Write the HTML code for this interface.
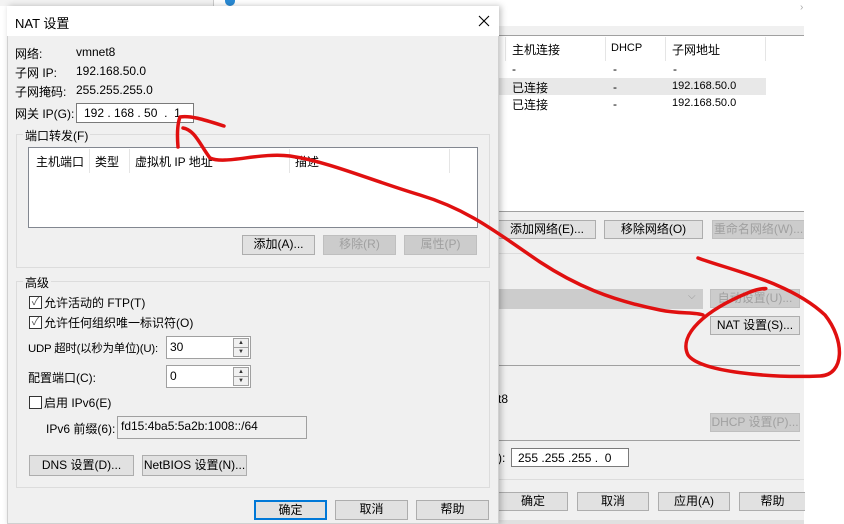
<!DOCTYPE html>
<html><head><meta charset="utf-8"><style>
*{box-sizing:border-box;margin:0;padding:0}
body{width:844px;height:524px;position:relative;overflow:hidden;background:#fff;font-family:"Liberation Sans","Noto Sans CJK SC",sans-serif;font-size:12px;color:#000}
.a{position:absolute;white-space:nowrap}
.btn{position:absolute;background:#e1e1e1;border:1px solid #adadad;text-align:center;line-height:17px;font-size:12px}
.dis{color:#a0a0a0;background:#cccccc;border-color:#bfbfbf}
.hl{position:absolute;height:1px;background:#a0a0a0}
.inp{position:absolute;background:#fff;border:1px solid #7a7a7a;padding-left:4px;line-height:18px}
.cb{position:absolute;width:13px;height:13px;border:1px solid #333;background:#fff;font-size:11px;line-height:11px;text-align:center;color:#555}
.grp{position:absolute;border:1px solid #dcdcdc}
.spin{position:absolute;width:16px;background:#f0f0f0;border:1px solid #a0a0a0;height:10px;font-size:6px;line-height:8px;text-align:center;color:#333}
</style></head><body>
<!-- background window -->
<div class="a" style="left:0;top:0;width:214px;height:6px;background:#f3f3f3"></div>
<div class="a" style="left:213px;top:0;width:1px;height:6px;background:#ccc"></div>
<div class="a" style="left:225px;top:0;width:10px;height:6px;border-radius:0 0 5px 5px;background:#2a8ad4"></div>
<div class="a" style="left:214px;top:26px;width:590px;height:498px;background:#f0f0f0"></div>
<div class="a" style="left:800px;top:2px;color:#aaa;font-size:10px">›</div>
<div class="a" style="left:214px;top:35px;width:590px;height:176px;background:#fff;border-top:1px solid #a0a0a0"></div>
<div class="a" style="left:505px;top:37px;width:1px;height:24px;background:#e5e5e5"></div>
<div class="a" style="left:605px;top:37px;width:1px;height:24px;background:#e5e5e5"></div>
<div class="a" style="left:665px;top:37px;width:1px;height:24px;background:#e5e5e5"></div>
<div class="a" style="left:765px;top:37px;width:1px;height:24px;background:#e5e5e5"></div>
<div class="a" style="left:512px;top:41px">主机连接</div>
<div class="a" style="left:611px;top:42px;font-size:11px">DHCP</div>
<div class="a" style="left:672px;top:41px">子网地址</div>
<div class="a" style="left:512px;top:62px">-</div><div class="a" style="left:613px;top:62px">-</div><div class="a" style="left:673px;top:62px">-</div>
<div class="a" style="left:498px;top:78px;width:268px;height:17px;background:#e8e8e8"></div>
<div class="a" style="left:512px;top:79px">已连接</div><div class="a" style="left:613px;top:80px">-</div><div class="a" style="left:672px;top:80px;font-size:11px">192.168.50.0</div>
<div class="a" style="left:512px;top:96px">已连接</div><div class="a" style="left:613px;top:97px">-</div><div class="a" style="left:672px;top:97px;font-size:11px">192.168.50.0</div>
<div class="hl" style="left:498px;top:211px;width:306px"></div>
<div class="btn" style="left:498px;top:220px;width:98px;height:19px">添加网络(E)...</div>
<div class="btn" style="left:604px;top:220px;width:99px;height:19px">移除网络(O)</div>
<div class="btn dis" style="left:712px;top:220px;width:92px;height:19px;border-right:none">重命名网络(W)...</div>
<div class="hl" style="left:498px;top:253px;width:306px;background:#dcdcdc"></div>
<div class="a" style="left:498px;top:289px;width:205px;height:20px;background:#cccccc"></div>
<div class="a" style="left:688px;top:291px;color:#999;font-size:10px">⌵</div>
<div class="btn dis" style="left:710px;top:289px;width:90px;height:19px">自动设置(U)...</div>
<div class="btn" style="left:710px;top:316px;width:90px;height:19px">NAT 设置(S)...</div>
<div class="hl" style="left:498px;top:365px;width:302px"></div>
<div class="a" style="left:498px;top:392px">t8</div>
<div class="btn dis" style="left:710px;top:413px;width:90px;height:19px">DHCP 设置(P)...</div>
<div class="hl" style="left:498px;top:440px;width:302px"></div>
<div class="a" style="left:498px;top:451px">):</div>
<div class="inp" style="left:511px;top:448px;width:118px;height:19px;padding-left:6px">255 .255 .255 .&nbsp; 0</div>
<div class="hl" style="left:498px;top:479px;width:306px;background:#dcdcdc"></div>
<div class="btn" style="left:498px;top:492px;width:70px;height:19px">确定</div>
<div class="btn" style="left:577px;top:492px;width:72px;height:19px">取消</div>
<div class="btn" style="left:658px;top:492px;width:72px;height:19px">应用(A)</div>
<div class="btn" style="left:739px;top:492px;width:66px;height:19px;border-right:none">帮助</div>
<div class="a" style="left:498px;top:520px;width:306px;height:4px;background:#e0e0e0"></div>

<!-- dialog -->
<div class="a" style="left:7px;top:6px;width:492px;height:518px;background:#f0f0f0;box-shadow:2px 0 6px rgba(0,0,0,.25);border:1px solid #d0d0d0"></div>
<div class="a" style="left:7px;top:6px;width:492px;height:30px;background:#fff"></div>
<div class="a" style="left:15px;top:13px;font-size:13px">NAT 设置</div>
<svg class="a" style="left:478px;top:15px" width="12" height="12"><path d="M1 1L11 11M11 1L1 11" stroke="#000" stroke-width="1.1"/></svg>
<div class="a" style="left:15px;top:45px">网络:</div><div class="a" style="left:76px;top:45px">vmnet8</div>
<div class="a" style="left:15px;top:64px">子网 IP:</div><div class="a" style="left:76px;top:64px">192.168.50.0</div>
<div class="a" style="left:15px;top:83px">子网掩码:</div><div class="a" style="left:76px;top:83px">255.255.255.0</div>
<div class="a" style="left:15px;top:105px">网关 IP(G):</div>
<div class="inp" style="left:76px;top:103px;width:118px;height:20px;padding-left:7px">192 . 168 . 50&nbsp; .&nbsp; 1</div>
<div class="grp" style="left:16px;top:134px;width:474px;height:134px"></div>
<div class="a" style="left:23px;top:127px;background:#f0f0f0;padding:0 2px">端口转发(F)</div>
<div class="a" style="left:28px;top:147px;width:450px;height:81px;background:#fff;border:1px solid #828790"></div>
<div class="a" style="left:89px;top:149px;width:1px;height:24px;background:#e5e5e5"></div>
<div class="a" style="left:129px;top:149px;width:1px;height:24px;background:#e5e5e5"></div>
<div class="a" style="left:289px;top:149px;width:1px;height:24px;background:#e5e5e5"></div>
<div class="a" style="left:449px;top:149px;width:1px;height:24px;background:#e5e5e5"></div>
<div class="a" style="left:36px;top:153px">主机端口</div>
<div class="a" style="left:95px;top:153px">类型</div>
<div class="a" style="left:135px;top:153px">虚拟机 IP 地址</div>
<div class="a" style="left:295px;top:153px">描述</div>
<div class="btn" style="left:242px;top:235px;width:73px;height:20px">添加(A)...</div>
<div class="btn dis" style="left:323px;top:235px;width:73px;height:20px">移除(R)</div>
<div class="btn dis" style="left:404px;top:235px;width:73px;height:20px">属性(P)</div>
<div class="grp" style="left:16px;top:281px;width:474px;height:207px"></div>
<div class="a" style="left:23px;top:274px;background:#f0f0f0;padding:0 2px">高级</div>
<div class="cb" style="left:29px;top:296px">✓</div><div class="a" style="left:44px;top:294px">允许活动的 FTP(T)</div>
<div class="cb" style="left:29px;top:316px">✓</div><div class="a" style="left:44px;top:314px">允许任何组织唯一标识符(O)</div>
<div class="a" style="left:28px;top:340px;font-size:11.4px;letter-spacing:-0.2px">UDP 超时(以秒为单位)(U):</div>
<div class="inp" style="left:166px;top:336px;width:85px;height:23px;border-color:#a0a0a0;line-height:20px;padding-left:3px">30</div>
<div class="spin" style="left:233px;top:338px">▲</div><div class="spin" style="left:233px;top:347px">▼</div>
<div class="a" style="left:28px;top:369px">配置端口(C):</div>
<div class="inp" style="left:166px;top:365px;width:85px;height:23px;border-color:#a0a0a0;line-height:20px;padding-left:3px">0</div>
<div class="spin" style="left:233px;top:367px">▲</div><div class="spin" style="left:233px;top:376px">▼</div>
<div class="cb" style="left:29px;top:396px"></div><div class="a" style="left:44px;top:394px">启用 IPv6(E)</div>
<div class="a" style="left:46px;top:420px">IPv6 前缀(6):</div>
<div class="a" style="left:117px;top:416px;width:190px;height:23px;background:#f0f0f0;border:1px solid #a0a0a0;padding-left:3px;line-height:18px">fd15:4ba5:5a2b:1008::/64</div>
<div class="btn" style="left:29px;top:455px;width:105px;height:21px;line-height:19px">DNS 设置(D)...</div>
<div class="btn" style="left:142px;top:455px;width:105px;height:21px;line-height:19px">NetBIOS 设置(N)...</div>
<div class="btn" style="left:254px;top:500px;width:73px;height:20px;border:2px solid #0078d7;line-height:16px">确定</div>
<div class="btn" style="left:335px;top:500px;width:73px;height:20px">取消</div>
<div class="btn" style="left:416px;top:500px;width:73px;height:20px">帮助</div>

<svg class="a" style="left:0;top:0" width="844" height="524" viewBox="0 0 844 524">
<g fill="none" stroke="#e01010" stroke-width="3.5" stroke-linecap="round" stroke-linejoin="round">
<path d="M224 126 C205 120 190 115 180 117 C177 125 177 135 178 147"/>
<path d="M183 128 C195 130 200 145 210 158 C225 165 260 152 290 156 C330 162 370 180 420 195 C470 210 500 235 540 262 C575 285 610 300 660 310 C680 314 695 312 703 315"/>
<path d="M698 258 C730 270 790 282 825 315 C845 340 845 375 820 376 C770 378 700 372 688 355 C678 335 705 310 750 292 C760 288 770 288 764 289"/>
</g></svg>
</body></html>
